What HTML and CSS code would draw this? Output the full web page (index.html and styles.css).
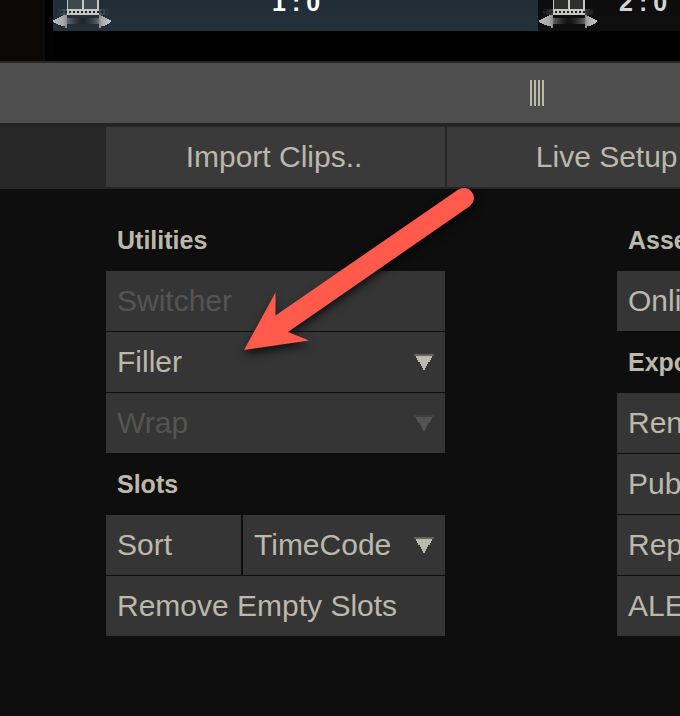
FILE: index.html
```html
<!DOCTYPE html>
<html lang="en">
<head>
<meta charset="utf-8">
<title>Utilities</title>
<link rel="stylesheet" href="styles.css">
</head>
<body>
<svg class="defs" width="0" height="0" aria-hidden="true">
  <defs>
    <linearGradient id="fade"><stop offset="0" stop-color="#777" stop-opacity=".8"/><stop offset=".45" stop-color="#1a1d1f" stop-opacity=".4"/><stop offset=".55" stop-color="#1a1d1f" stop-opacity=".4"/><stop offset="1" stop-color="#777" stop-opacity=".8"/></linearGradient>
    <linearGradient id="head-l"><stop offset="0" stop-color="#b8b8b8"/><stop offset=".7" stop-color="#aaa"/><stop offset="1" stop-color="#8c8c8c"/></linearGradient>
    <linearGradient id="head-r"><stop offset="0" stop-color="#8c8c8c"/><stop offset=".3" stop-color="#aaa"/><stop offset="1" stop-color="#c8c8c8"/></linearGradient>
    <linearGradient id="edge"><stop offset="0" stop-color="#aaa" stop-opacity="0"/><stop offset=".25" stop-color="#aaa" stop-opacity=".4"/><stop offset=".75" stop-color="#aaa" stop-opacity=".4"/><stop offset="1" stop-color="#aaa" stop-opacity="0"/></linearGradient>
    <symbol id="film" viewBox="0 0 60 31">
      <g shape-rendering="crispEdges">
      <path d="M4 9h52v6H4z" fill="url(#edge)"/>
      <path d="M15 0h30v9H15z" fill="#aaa" fill-opacity=".22"/>
      <path d="M14 0h1v9h-1zM29 0h2v9h-2zM44 0h2v9h-2zM14 9h32v6H14z" fill="#c6c6c2"/>
      <path d="M4 12h52" stroke="#20282d" stroke-width="2" stroke-dasharray="2 2"/>
      <path d="M14 18h32v6H14z" fill="url(#fade)"/>
      <path d="M0 20h2v-1h2v-1h2v-1h2v-1h2v-1h4v13h-2v-2H8v-1H5v-1H3v-1H1v-1H0z" fill="url(#head-l)"/>
      <path d="M58 20h-2v-1h-2v-1h-2v-1h-2v-1h-2v-1h-2v13h2v-2h4v-1h2v-1h2v-1h1v-1h1z" fill="url(#head-r)"/>
      </g>
    </symbol>
    <symbol id="caret" viewBox="0 0 20 18">
      <g shape-rendering="crispEdges" fill="currentColor">
      <path d="M0 0h20v2H0z" opacity=".35"/>
      <path d="M2 2h16v2h-1v2h-1v2h-2v2h-1v2h-1v2h-1v2H9v-2H8v-2H7v-2H6V8H4V6H3V4H2z"/>
      </g>
    </symbol>
  </defs>
</svg>
<div class="app">
  <header class="timeline">
    <div class="thumb"></div>
    <div class="slot slot-active"><svg class="film"><use href="#film"/></svg><span class="num">1:0</span></div>
    <div class="slot"><svg class="film"><use href="#film"/></svg><span class="num">2:0</span></div>
  </header>
  <div class="splitter"><div class="grip"></div></div>
  <nav class="tabs"><div class="tab">Import Clips..</div><div class="tab">Live Setup..</div></nav>
  <main class="panels">
    <section class="column">
      <h2>Utilities</h2>
      <div class="button disabled">Switcher</div>
      <div class="button">Filler<svg class="caret"><use href="#caret"/></svg></div>
      <div class="button disabled">Wrap<svg class="caret"><use href="#caret"/></svg></div>
      <h2>Slots</h2>
      <div class="row"><div class="button sort">Sort</div><div class="button mode">TimeCode<svg class="caret"><use href="#caret"/></svg></div></div>
      <div class="button">Remove Empty Slots</div>
    </section>
    <section class="column">
      <h2>Assets</h2>
      <div class="button">Online</div>
      <h2>Export</h2>
      <div class="button">Render</div>
      <div class="button">Publish</div>
      <div class="button">Report</div>
      <div class="button">ALE</div>
    </section>
  </main>
  <svg class="arrow" viewBox="0 0 260 190" aria-hidden="true"><path d="M14 170L45.500 112.500V135.500L228 9.800A10 10 0 0 1 239.700 26.200L58 152L79 160.500Z" fill="#ff5a4c"/></svg>
</div>
</body>
</html>
```
FILE: styles.css
```css
* { box-sizing: border-box; }
body { margin: 0; background: #0e0e0e; overflow: hidden; }
.defs { display: block; }
.app {
  position: relative;
  width: 680px;
  height: 716px;
  overflow: hidden;
  color: #bcb8aa;
  font: 30px/60px "Liberation Sans", Arial, sans-serif;
}
.timeline { display: flex; height: 61px; background: #000; }
.thumb { width: 53px; background: linear-gradient(90deg, #0a0908 0 43px, #0e0e0e 43px 45px, #020202 45px); flex: none; }
.slot { display: flex; height: 31px; width: 485px; flex: none; background: linear-gradient(#0c0c0c, #101010); color: #d4d4d4; }
.slot-active { background: linear-gradient(#222e37, #25313a); color: #fff; }
.film { width: 60px; height: 31px; margin-left: 1px; flex: none; }
.slot-active .film { margin-left: 0; }
.num { margin: -10px 0 0 159px; font: bold 25px/25px "Liberation Sans", Arial, sans-serif; letter-spacing: 6px; }
.slot:last-child .num { margin-left: 20px; }
.splitter {
  height: 65px;
  padding: 17px 0 0 530px;
  background: #4e4e4e;
  border-top: 2px solid #292929;
  border-bottom: 3px solid #242424;
}
.grip { width: 14px; height: 26px; background: repeating-linear-gradient(90deg, #bcb8aa 0 2px, transparent 2px 4px); }
.tabs { display: flex; gap: 2px; height: 63px; padding: 1px 0 2px 106px; background: #272727; }
.tab { flex: none; width: 339px; height: 60px; background: #3a3a3a; text-align: center; padding-right: 3px; }
.panels { display: flex; gap: 172px; padding: 21px 0 0 106px; }
.column { display: flex; flex-direction: column; gap: 1px; width: 339px; flex: none; }
h2 { margin: 0; height: 60px; padding-left: 11px; font-size: 25px; line-height: 60px; }
.button { display: flex; justify-content: space-between; height: 60px; padding: 0 11px; background: #353535; white-space: nowrap; }
.disabled { color: #545454; }
.row { display: flex; gap: 2px; }
.sort { width: 135px; }
.mode { width: 202px; }
.caret { width: 20px; height: 18px; margin-top: 22px; }
.arrow { position: absolute; left: 230px; top: 180px; width: 260px; height: 190px; filter: drop-shadow(0 5px 4px rgba(0, 0, 0, .65)); }
```
